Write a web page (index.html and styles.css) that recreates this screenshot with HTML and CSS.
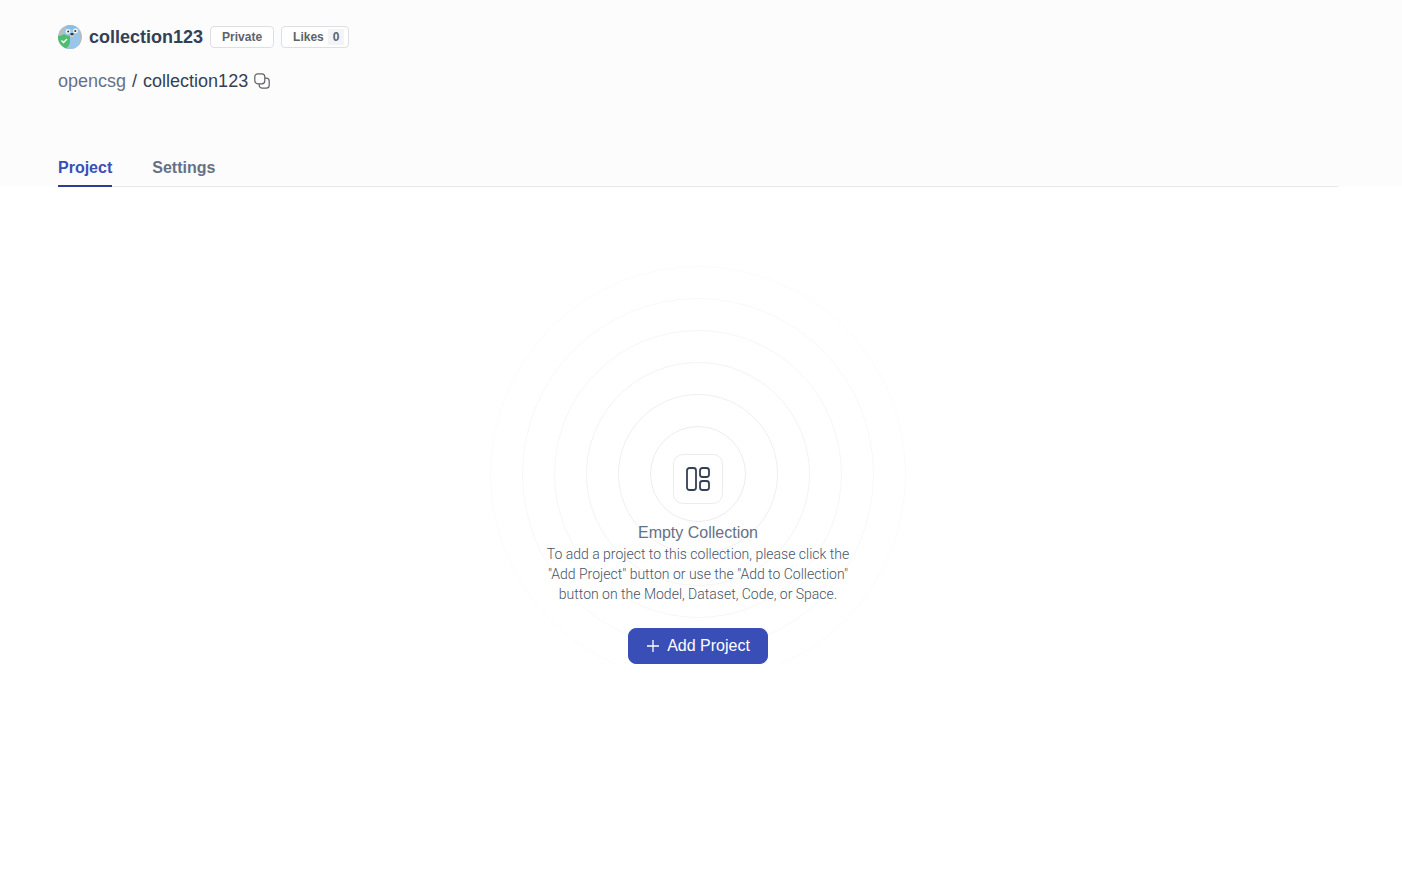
FILE: index.html
```
<!doctype html>

<html lang="en">
<head>
    <meta charset="utf-8">
    <meta name="viewport" content="width=device-width, initial-scale=1">
    <title>collection123</title>
    <link rel="stylesheet" href="styles.css">
</head>

<body>
    <header class="page-header">
        <div class="container">
            <div class="title-row">
                <svg class="avatar" width="24" height="24" viewBox="0 0 24 24" aria-hidden="true">
                    <defs>
                        <clipPath id="avatar-clip"><circle cx="12" cy="12" r="12"/></clipPath>
                    </defs>
                    <g clip-path="url(#avatar-clip)">
                        <rect width="24" height="24" fill="#b4bcc4"/>
                        <path d="M5 24V9C5 3 9 0 14 0s8 4 8 10v14z" fill="#98c5e8"/>
                        <path d="M8 1c3-2 9-2 12 1l-2 2H9z" fill="#8bbfe2"/>
                        <circle cx="10" cy="6.500" r="2.400" fill="#f7f5ee"/>
                        <circle cx="17.500" cy="6" r="2.400" fill="#f7f5ee"/>
                        <circle cx="10.200" cy="6.500" r="1" fill="#26333f"/>
                        <circle cx="17.300" cy="6" r="1" fill="#26333f"/>
                        <ellipse cx="14" cy="10.500" rx="2.200" ry="1.200" fill="#e5cfb4"/>
                        <ellipse cx="14" cy="9.200" rx="1.700" ry="1.100" fill="#2b3238"/>
                        <path d="M0 11c2.500 0 4.500-.7 6-2 1.600 1.300 3.500 2 6 2v5c0 4-2.500 7-6 8-4-1-6-4-6-8z" fill="#50bc70"/>
                        <path d="M3.500 15.500l2 2 3.500-3.500" fill="none" stroke="#fff" stroke-width="1.400"/>
                    </g>
                </svg>
                <h1>collection123</h1>
                <span class="tag">Private</span>
                <button type="button" class="tag">Likes <span class="count">0</span></button>
            </div>

            <div class="path-row">
                <a href="#" class="owner">opencsg</a>
                <span>/</span>
                <span>collection123</span>
                <button type="button" class="copy-button" aria-label="Copy path">
                    <svg width="16" height="16" viewBox="0 0 16 16" fill="none" stroke="#606266" stroke-width="1.200" aria-hidden="true">
                        <rect x="0.800" y="0.800" width="10" height="10" rx="3"/>
                        <path d="M10.800 5.200h1.400a3 3 0 0 1 3 3v4a3 3 0 0 1-3 3h-4a3 3 0 0 1-3-3v-1.400"/>
                    </svg>
                </button>
            </div>

            <nav class="tabs">
                <a href="#" class="tab active">Project</a>
                <a href="#" class="tab">Settings</a>
            </nav>
        </div>
    </header>

    <main class="empty-state">
        <div class="empty-icon">
            <svg class="rings" width="418" height="418" viewBox="-209 -209 418 418" fill="none" stroke="#101010" aria-hidden="true">
                <circle r="47.500" opacity="0.080"/>
                <circle r="79.500" opacity="0.065"/>
                <circle r="111.500" opacity="0.050"/>
                <circle r="143.500" opacity="0.040"/>
                <circle r="175.500" opacity="0.030"/>
                <circle r="207.500" opacity="0.018"/>
            </svg>
            <svg class="layout-icon" width="24" height="24" viewBox="0 0 24 24" fill="none" stroke="#344054" stroke-width="1.800" aria-hidden="true">
                <rect x="1" y="1" width="9" height="22" rx="2.500"/>
                <rect x="14" y="1" width="9" height="9" rx="2.500"/>
                <rect x="14" y="14" width="9" height="9" rx="2.500"/>
            </svg>
        </div>
        <h2>Empty Collection</h2>
        <p>To add a project to this collection, please click the "Add Project" button or use the "Add to Collection" button on the Model, Dataset, Code, or Space.</p>
        <button type="button" class="add-button">
            <svg width="14" height="14" viewBox="0 0 14 14" stroke="#fff" stroke-width="1.300" aria-hidden="true">
                <path d="M7 1v12M1 7h12"/>
            </svg>
            Add Project
        </button>
    </main>
</body>
</html>
```

FILE: styles.css
```
* {
    box-sizing: border-box;
}

body {
    margin: 0;
    background: #ffffff;
    color: #344054;
    font-family: "Helvetica Neue", "Liberation Sans", Arial, sans-serif;
}

h1, h2, p {
    margin: 0;
}

button {
    font-family: inherit;
    cursor: pointer;
}

a {
    text-decoration: none;
}

.page-header {
    padding: 24px 64px 0 58px;
    background: #fcfcfd;
}

.container {
    max-width: 1280px;
    margin: 0 auto;
}

.title-row {
    display: flex;
    align-items: center;
    gap: 7px;
    height: 26px;
}

h1 {
    font-size: 18px;
    line-height: 26px;
    font-weight: 600;
}

.tag {
    display: flex;
    align-items: center;
    gap: 4px;
    height: 22px;
    padding: 0 11px;
    border: 1px solid #dcdfe6;
    border-radius: 4px;
    background: #ffffff;
    color: #606266;
    font-size: 12px;
    font-weight: 600;
}

button.tag {
    padding-right: 4px;
}

.count {
    padding: 0 5px;
    background: #f2f4f7;
    line-height: 16px;
}

.path-row {
    display: flex;
    align-items: center;
    gap: 6px;
    margin-top: 18px;
    font-size: 18px;
    line-height: 26px;
}

.owner {
    color: #667085;
}

.copy-button {
    display: flex;
    padding: 0;
    border: 0;
    background: none;
}

.tabs {
    display: flex;
    gap: 40px;
    margin-top: 54px;
    border-bottom: 1px solid #e4e7ed;
}

.tab {
    height: 39px;
    margin-bottom: -1px;
    color: #667085;
    font-size: 16px;
    line-height: 39px;
    font-weight: 600;
}

.tab.active {
    border-bottom: 2px solid #2a3d9b;
    color: #3a4eb7;
}

.empty-state {
    display: flex;
    flex-direction: column;
    align-items: center;
    padding: 267px 6px 0 0;
    text-align: center;
}

.empty-icon {
    position: relative;
    display: flex;
    align-items: center;
    justify-content: center;
    width: 50px;
    height: 50px;
    margin-bottom: 18px;
    border: 1px solid #eaecf0;
    border-radius: 10px;
    background: #ffffff;
}

/* faint circles spreading out behind the text */
.rings {
    position: absolute;
    top: -190px;
    left: -185px;
    z-index: -1;
}

h2 {
    color: #667085;
    font-size: 16px;
    line-height: 22px;
    font-weight: 400;
}

.empty-state p {
    max-width: 310px;
    color: #475467;
    font-family: "Helvetica Neue", Roboto, sans-serif;
    font-size: 14px;
    line-height: 20px;
    font-weight: 300;
}

.add-button {
    display: flex;
    align-items: center;
    gap: 7px;
    height: 36px;
    margin-top: 24px;
    padding: 0 17px;
    border: 1px solid #3a4eb7;
    border-radius: 8px;
    background: #3a4eb7;
    color: #ffffff;
    font-size: 16px;
}
```
